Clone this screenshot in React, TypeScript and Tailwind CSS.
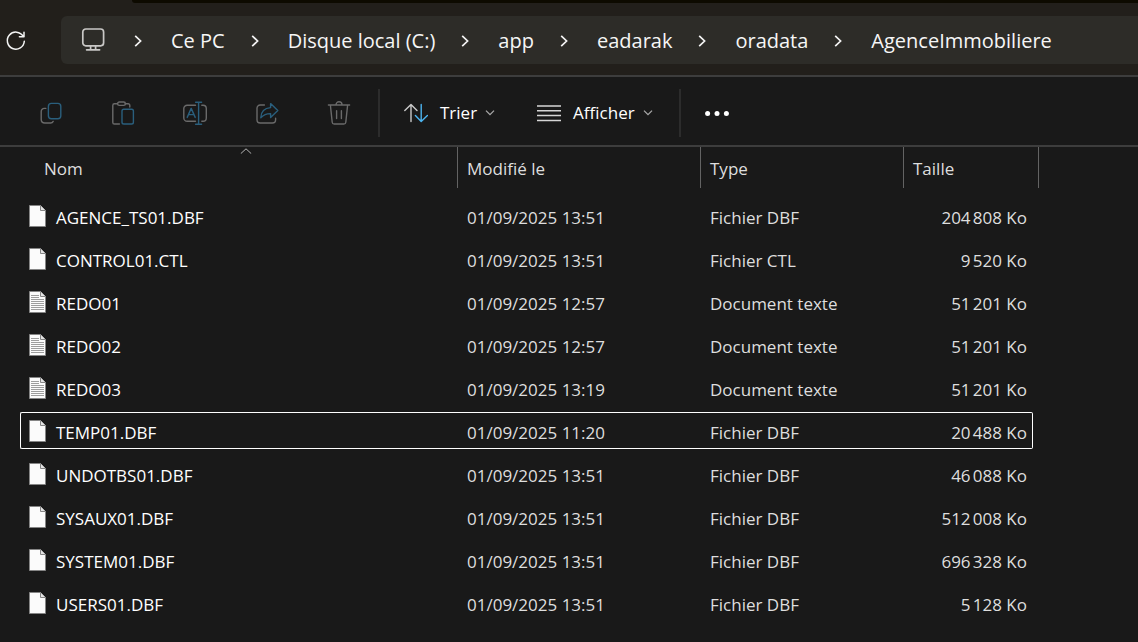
import type { ReactNode } from "react";

type FileRow = {
  name: string;
  modified: string;
  type: string;
  size: string;
  text?: boolean;
  focused?: boolean;
};

const files: FileRow[] = [
  { name: "AGENCE_TS01.DBF", modified: "01/09/2025 13:51", type: "Fichier DBF", size: "204\u202f808 Ko" },
  { name: "CONTROL01.CTL", modified: "01/09/2025 13:51", type: "Fichier CTL", size: "9\u202f520 Ko" },
  { name: "REDO01", modified: "01/09/2025 12:57", type: "Document texte", size: "51\u202f201 Ko", text: true },
  { name: "REDO02", modified: "01/09/2025 12:57", type: "Document texte", size: "51\u202f201 Ko", text: true },
  { name: "REDO03", modified: "01/09/2025 13:19", type: "Document texte", size: "51\u202f201 Ko", text: true },
  { name: "TEMP01.DBF", modified: "01/09/2025 11:20", type: "Fichier DBF", size: "20\u202f488 Ko", focused: true },
  { name: "UNDOTBS01.DBF", modified: "01/09/2025 13:51", type: "Fichier DBF", size: "46\u202f088 Ko" },
  { name: "SYSAUX01.DBF", modified: "01/09/2025 13:51", type: "Fichier DBF", size: "512\u202f008 Ko" },
  { name: "SYSTEM01.DBF", modified: "01/09/2025 13:51", type: "Fichier DBF", size: "696\u202f328 Ko" },
  { name: "USERS01.DBF", modified: "01/09/2025 13:51", type: "Fichier DBF", size: "5\u202f128 Ko" },
];

const crumbs = ["Ce PC", "Disque local (C:)", "app", "eadarak", "oradata", "AgenceImmobiliere"];

const GRAY = "#6a6a6a";
const BLUE = "#2a5f7d";

function Icon({ children }: { children: ReactNode }) {
  return (
    <svg className="size-6 shrink-0" viewBox="0 0 24 24" fill="none" strokeWidth="1.4" strokeLinecap="round" strokeLinejoin="round" aria-hidden="true">
      {children}
    </svg>
  );
}

function CopyIcon() {
  return (
    <Icon>
      <path stroke={GRAY} d="M6.8 7.4H5.4A3 3 0 0 0 2.2 10.4V18.6A3.6 3.6 0 0 0 5.8 22H11.4A3 3 0 0 0 14.2 20.4" />
      <rect stroke={BLUE} x="9.4" y="2.4" width="12.4" height="15.4" rx="3" />
    </Icon>
  );
}

function PasteIcon() {
  return (
    <Icon>
      <path stroke={GRAY} d="M6.5 2.8H3.4A1.6 1.6 0 0 0 1.8 4.4V21.4A1.6 1.6 0 0 0 3.4 23H8.4M14.2 2.8H17.2A1.6 1.6 0 0 1 18.8 4.4V6" />
      <rect stroke={GRAY} x="6.6" y="1" width="7.8" height="3.4" rx="1.7" />
      <rect stroke={BLUE} x="11" y="8.2" width="11.4" height="14.8" rx="1.8" />
    </Icon>
  );
}

function RenameIcon() {
  return (
    <Icon>
      <path stroke={GRAY} d="M12.5 4.2H4.2A3.4 3.4 0 0 0 .8 7.6V16.9A3.4 3.4 0 0 0 4.2 20.3H12.5M18.8 4.2H20A3.4 3.4 0 0 1 23.3 7.6V16.9A3.4 3.4 0 0 1 20 20.3H18.8" />
      <path stroke={BLUE} d="M4.2 16.4L8.2 7.4L12.2 16.4M5.6 13.6H10.8M15.6 1.2V23M12.6 1.2H18.6M12.6 23.2H18.6" />
    </Icon>
  );
}

function ShareIcon() {
  return (
    <Icon>
      <path stroke={GRAY} d="M9.4 4H5.2A3.2 3.2 0 0 0 2 7.2V18.8A3.2 3.2 0 0 0 5.2 22H17.4A3.2 3.2 0 0 0 20.6 18.8V17.2" />
      <path stroke={BLUE} d="M15.6 2.6L22.8 9.6L15.6 16.5V12.6C11.4 12.5 8.8 13.5 5.8 16.7C6 11.1 9 7.1 15.6 6.6Z" />
    </Icon>
  );
}

function TrashIcon() {
  return (
    <Icon>
      <path stroke={GRAY} d="M1.4 4H22.6M9 3.8A3 3 0 0 1 15 3.8M3.4 4.2L5.2 21.2A2 2 0 0 0 7.2 23H16.8A2 2 0 0 0 18.8 21.2L20.6 4.2M9.6 9.8V17.6M14.4 9.8V17.6" />
    </Icon>
  );
}

const actions = [
  { label: "Copier", icon: <CopyIcon /> },
  { label: "Coller", icon: <PasteIcon /> },
  { label: "Renommer", icon: <RenameIcon /> },
  { label: "Partager", icon: <ShareIcon /> },
  { label: "Supprimer", icon: <TrashIcon /> },
];

function ChevronRight() {
  return (
    <svg className="h-3 w-2 shrink-0" viewBox="0 0 8 12" fill="none" stroke="#f4f4f4" strokeWidth="1.7" aria-hidden="true">
      <path d="M1.2 .8L6.6 6L1.2 11.2" />
    </svg>
  );
}

function ChevronDown() {
  return (
    <svg className="h-2 w-[10px] shrink-0" viewBox="0 0 10 8" fill="none" stroke="#a9a9a9" strokeWidth="1.3" aria-hidden="true">
      <path d="M1 1.6L5 5.6L9 1.6" />
    </svg>
  );
}

function FileIcon({ text }: { text?: boolean }) {
  return (
    <svg className="h-[22px] w-[17px] shrink-0" viewBox="0 0 17 22" aria-hidden="true">
      <path d="M.5 .5H11.5L16.5 5.5V21.5H.5Z" fill="#fbfbfb" stroke="#858585" />
      <path d="M11.5 .5V5.5H16.5" fill="#e4e4e4" stroke="#858585" />
      {text && <path d="M2 4.5H10M2 6.5H10M2 8.5H15M2 10.5H15M2 12.5H15M2 14.5H15M2 16.5H15M2 18.5H15" stroke="#9d9d9d" />}
    </svg>
  );
}

export default function App() {
  return (
    <div className="min-h-screen bg-[#191919] font-['Open_Sans','Noto_Sans',sans-serif] text-[17px] leading-6 text-[#dedede]">
      <header className="border-b-2 border-[#3d3d3d] bg-[#221f1b]">
        <div className="ml-[132px] h-[3px] rounded-bl-md bg-[#0d0a00]" />
        <div className="flex items-center pt-[13px] pb-[11px]">
          <button type="button" aria-label="Actualiser" className="mx-1 shrink-0 pt-[2px]">
            <svg className="size-6" viewBox="0 0 24 24" fill="none" stroke="#f4f4f4" strokeWidth="1.5" strokeLinecap="round" strokeLinejoin="round" aria-hidden="true">
              <path d="M19.2 7.4A8.5 8.5 0 1 0 20.3 12.2M20 3.2V7.8H15.4" />
            </svg>
          </button>
          <nav aria-label="Chemin" className="ml-[29px] flex h-12 flex-1 items-center rounded-l-md bg-[#2d2c28] pl-5 text-xl text-[#f6f6f6]">
            <svg className="h-6 w-6 shrink-0" viewBox="0 0 24 24" fill="none" stroke="#c9c8c6" strokeWidth="1.7" strokeLinecap="round" aria-hidden="true">
              <rect x="1.8" y="1" width="20.8" height="16.8" rx="3" />
              <path d="M9.6 18V21.6M14.6 18V21.6M5.6 21.8H18.6" />
            </svg>
            <ol className="ml-[29px] flex items-center gap-[26px] pt-[2px] whitespace-nowrap">
              {crumbs.map((crumb) => (
                <li key={crumb} className="flex items-center gap-[29px]">
                  <ChevronRight />
                  <a href="#">{crumb}</a>
                </li>
              ))}
            </ol>
          </nav>
        </div>
      </header>

      <div role="toolbar" aria-label="Commandes" className="flex items-center border-b-2 border-[#3d3d3d] pt-3 pb-2 pl-[39px] text-white">
        <div className="flex gap-12">
          {actions.map((action) => (
            <button key={action.label} type="button" aria-label={action.label} disabled>
              {action.icon}
            </button>
          ))}
        </div>
        <span className="ml-[27px] h-12 w-[2px] bg-[#2c2c2c]" />
        <button type="button" className="ml-6 flex items-center">
          <Icon>
            <path stroke="#c9c9c9" d="M7 20.5V3.6M.8 9.6L7 3.4L13 9.6" />
            <path stroke="#4cb4f0" d="M17.2 3.4V20.4M11.4 14.6L17.2 20.6L23.4 14.6" />
          </Icon>
          <span className="mr-2 ml-3">Trier</span>
          <ChevronDown />
        </button>
        <button type="button" className="ml-[42px] flex items-center">
          <svg className="size-6" viewBox="0 0 24 24" stroke="#d6d6d6" strokeWidth="1.5" aria-hidden="true">
            <path d="M0 5H24M0 9.8H24M0 14.6H24M0 19.4H24" />
          </svg>
          <span className="mr-2 ml-3">Afficher</span>
          <ChevronDown />
        </button>
        <span className="ml-[26px] h-12 w-[2px] bg-[#2c2c2c]" />
        <button type="button" aria-label="Voir plus" className="ml-6">
          <svg className="size-6" viewBox="0 0 24 24" fill="#fff" aria-hidden="true">
            <circle cx="2.6" cy="12.6" r="2.5" />
            <circle cx="12" cy="12.6" r="2.5" />
            <circle cx="21.4" cy="12.6" r="2.5" />
          </svg>
        </button>
      </div>

      <main className="overflow-x-auto">
        <table className="ml-5 w-[1019px] table-fixed border-collapse whitespace-nowrap">
          <colgroup>
            <col className="w-[438px]" />
            <col className="w-[243px]" />
            <col className="w-[203px]" />
            <col className="w-[129px]" />
            <col className="w-[6px]" />
          </colgroup>
          <thead>
            <tr className="h-[47px] text-left align-top">
              <th scope="col" aria-sort="ascending" className="p-0 font-normal">
                <button type="button" className="relative flex h-[41px] w-full items-center border-r border-[#636363] pt-[2px] pl-6">
                  Nom
                  <svg className="absolute top-px right-[205px] h-[6px] w-3" viewBox="0 0 12 6" fill="none" stroke="#b4b4b4" aria-hidden="true">
                    <path d="M.8 5.6L6 .8L11.2 5.6" />
                  </svg>
                </button>
              </th>
              <th scope="col" className="p-0 font-normal">
                <button type="button" className="flex h-[41px] w-full items-center border-r border-[#636363] pt-[2px] pl-[9px]">Modifié le</button>
              </th>
              <th scope="col" className="p-0 font-normal">
                <button type="button" className="flex h-[41px] w-full items-center border-r border-[#636363] pt-[2px] pl-[9px]">Type</button>
              </th>
              <th scope="col" colSpan={2} className="p-0 font-normal">
                <button type="button" className="flex h-[41px] w-full items-center border-r border-[#636363] pt-[2px] pl-[9px]">Taille</button>
              </th>
            </tr>
          </thead>
          <tbody>
            {files.map((file) => {
              const edge = file.focused ? "border-white" : "border-transparent";
              return (
                <tr key={file.name} className="h-[43px]">
                  <td className="p-0">
                    <div className={`flex h-[37px] items-center gap-[10px] rounded-l-xs border-y border-l pl-2 text-white ${edge}`}>
                      <FileIcon text={file.text} />
                      <span className="pt-1">{file.name}</span>
                    </div>
                  </td>
                  <td className="p-0">
                    <div className={`flex h-[37px] items-center border-y pt-1 pl-[9px] ${edge}`}>{file.modified}</div>
                  </td>
                  <td className="p-0">
                    <div className={`flex h-[37px] items-center border-y pt-1 pl-[9px] ${edge}`}>{file.type}</div>
                  </td>
                  <td className="p-0">
                    <div className={`flex h-[37px] items-center justify-end rounded-r-xs border-y border-r pt-1 pr-[5px] ${edge}`}>{file.size}</div>
                  </td>
                  <td className="p-0" />
                </tr>
              );
            })}
          </tbody>
        </table>
      </main>
    </div>
  );
}
